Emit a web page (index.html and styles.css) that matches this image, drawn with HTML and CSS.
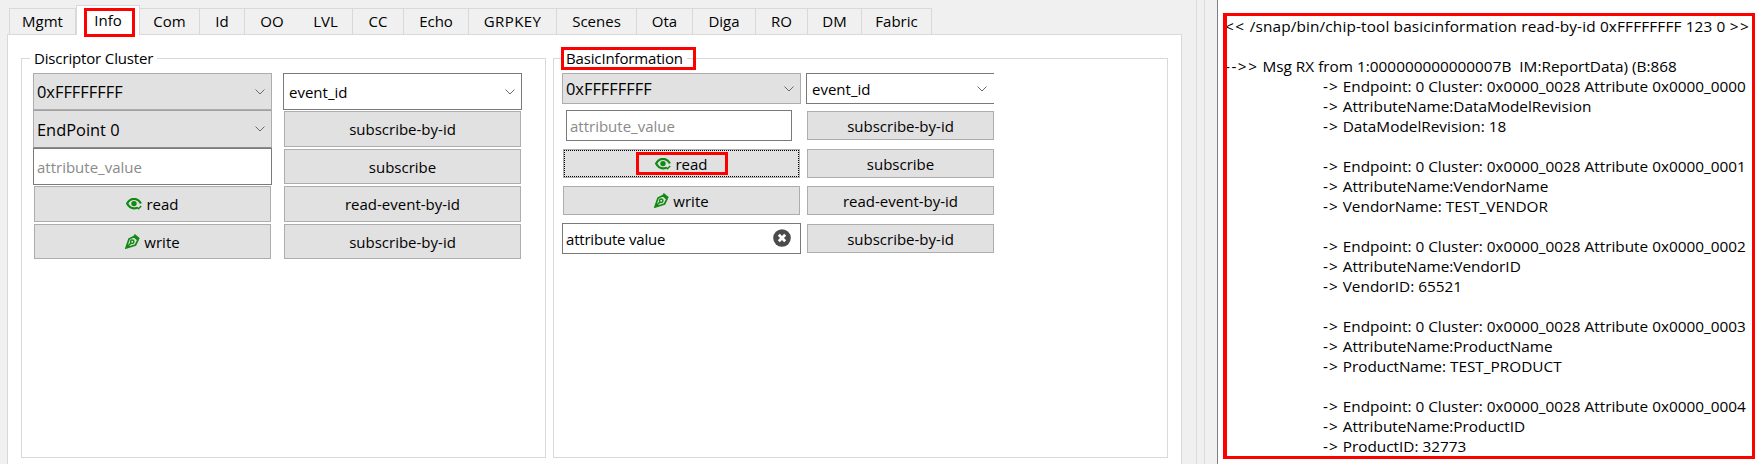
FILE: index.html
```html
<!DOCTYPE html>
<html lang="en">
<head>
<meta charset="utf-8">
<title>Matter tool</title>
<link rel="stylesheet" href="styles.css">
</head>
<body>
<svg class="defs" width="0" height="0" aria-hidden="true">
  <symbol id="i-read" viewBox="0 0 16 12">
    <path d="M11.200 9.800C10.200 10.200 9.200 10.400 8 10.400 5 10.400 2.600 8.500 1.100 5.600 2.600 2.700 5 .9 8 .9s5.400 1.800 6.900 4.700" fill="none" stroke="currentColor" stroke-width="2.200"/>
    <circle cx="8" cy="5.600" r="2.700" fill="currentColor"/>
    <path d="M11 9.300l1.500 1.500 2.700-2.800" fill="none" stroke="currentColor" stroke-width="1.500"/>
  </symbol>
  <symbol id="i-write" viewBox="0 0 15 15">
    <path fill="none" stroke="currentColor" stroke-width="1.700" d="M9.300 .7l5 4.200M9 2.500L4 5 1 14l9.500-3L13 6zM1.500 13.500L6 9"/>
    <circle cx="7.200" cy="7.800" r="1.700" fill="none" stroke="currentColor" stroke-width="1.500"/>
  </symbol>
  <symbol id="i-chev" viewBox="0 0 10 6">
    <path d="M.5.500L5 5 9.500.500" fill="none" stroke="currentColor"/>
  </symbol>
</svg>
<div class="app">
  <main class="left">
    <nav class="tabs">
      <span class="tab t-mgmt">Mgmt</span>
      <span class="tab active t-info">Info<i class="mark mark-info"></i></span>
      <span class="tab t-com">Com</span>
      <span class="tab t-id">Id</span>
      <span class="tab t-oo">OO</span>
      <span class="tab t-lvl">LVL</span>
      <span class="tab t-cc">CC</span>
      <span class="tab t-echo">Echo</span>
      <span class="tab t-grp">GRPKEY</span>
      <span class="tab t-sc">Scenes</span>
      <span class="tab t-ota">Ota</span>
      <span class="tab t-diga">Diga</span>
      <span class="tab t-ro">RO</span>
      <span class="tab t-dm">DM</span>
      <span class="tab t-fab">Fabric</span>
    </nav>
    <section class="pane">
      <div class="group g1">
        <span class="legend">Discriptor Cluster</span>
        <div class="cols">
          <div class="col c1">
            <div class="combo big h37">0xFFFFFFFF<svg class="chev"><use href="#i-chev"/></svg></div>
            <div class="combo big h38 dark">EndPoint 0<svg class="chev"><use href="#i-chev"/></svg></div>
            <div class="input h37 ph">attribute_value</div>
            <button class="btn h36 inset top1"><svg class="ico ico-read"><use href="#i-read"/></svg>read</button>
            <button class="btn h35 inset top2"><svg class="ico ico-write"><use href="#i-write"/></svg>write</button>
          </div>
          <div class="col c2">
            <div class="combo white h37">event_id<svg class="chev"><use href="#i-chev"/></svg></div>
            <button class="btn h36 inset top1">subscribe-by-id</button>
            <button class="btn h35 inset top2">subscribe</button>
            <button class="btn h36 inset top2">read-event-by-id</button>
            <button class="btn h35 inset top2">subscribe-by-id</button>
          </div>
        </div>
      </div>
      <div class="group g2">
        <span class="legend">BasicInformation<i class="mark mark-title"></i></span>
        <div class="cols">
          <div class="col c3">
            <div class="combo big h31">0xFFFFFFFF<svg class="chev"><use href="#i-chev"/></svg></div>
            <div class="input h31 ph narrow">attribute_value</div>
            <button class="btn h29 focus"><span class="readbox"><svg class="ico ico-read"><use href="#i-read"/></svg>read</span></button>
            <button class="btn h29 mid"><svg class="ico ico-write"><use href="#i-write"/></svg>write</button>
            <div class="input h31 clear">attribute value<svg class="x" viewBox="0 0 18 18"><circle cx="9" cy="9" r="8.800" fill="#4b4b4b"/><path d="M5.800 5.800l6.400 6.400M12.200 5.800l-6.400 6.400" stroke="#fff" stroke-width="2.800"/></svg></div>
          </div>
          <div class="col c4">
            <div class="combo white h31 open">event_id<svg class="chev"><use href="#i-chev"/></svg></div>
            <button class="btn h29 r1">subscribe-by-id</button>
            <button class="btn h29 r2">subscribe</button>
            <button class="btn h29 r3">read-event-by-id</button>
            <button class="btn h29 r4">subscribe-by-id</button>
          </div>
        </div>
      </div>
    </section>
  </main>
  <div class="split"></div>
  <aside class="log">
<pre class="logtext"><span class="head"><span class="ar">&lt;&lt;</span> /snap/bin/chip-tool basicinformation read-by-id 0xFFFFFFFF 123 0 <span class="ar">&gt;&gt;</span></span>

<span class="ar">--&gt;&gt;</span> Msg RX from 1:000000000000007B  IM:ReportData) (B:868
<span class="ind"><span class="ar1">-&gt;</span> Endpoint: 0 Cluster: 0x0000_0028 Attribute 0x0000_0000</span>
<span class="ind"><span class="ar1">-&gt;</span> AttributeName:DataModelRevision</span>
<span class="ind"><span class="ar1">-&gt;</span> DataModelRevision: 18</span>

<span class="ind"><span class="ar1">-&gt;</span> Endpoint: 0 Cluster: 0x0000_0028 Attribute 0x0000_0001</span>
<span class="ind"><span class="ar1">-&gt;</span> AttributeName:VendorName</span>
<span class="ind"><span class="ar1">-&gt;</span> VendorName: TEST_VENDOR</span>

<span class="ind"><span class="ar1">-&gt;</span> Endpoint: 0 Cluster: 0x0000_0028 Attribute 0x0000_0002</span>
<span class="ind"><span class="ar1">-&gt;</span> AttributeName:VendorID</span>
<span class="ind"><span class="ar1">-&gt;</span> VendorID: 65521</span>

<span class="ind"><span class="ar1">-&gt;</span> Endpoint: 0 Cluster: 0x0000_0028 Attribute 0x0000_0003</span>
<span class="ind"><span class="ar1">-&gt;</span> AttributeName:ProductName</span>
<span class="ind"><span class="ar1">-&gt;</span> ProductName: TEST_PRODUCT</span>

<span class="ind"><span class="ar1">-&gt;</span> Endpoint: 0 Cluster: 0x0000_0028 Attribute 0x0000_0004</span>
<span class="ind"><span class="ar1">-&gt;</span> AttributeName:ProductID</span>
<span class="ind"><span class="ar1">-&gt;</span> ProductID: 32773</span></pre>
    <i class="mark mark-log"></i>
  </aside>
</div>
</body>
</html>
```
FILE: styles.css
```css
* { box-sizing: border-box; }
html, body { margin: 0; height: 100%; }
body {
  background: #f0f0f0;
  color: #000;
  font-family: "Open Sans", "Noto Sans", sans-serif;
  font-size: 15px;
  overflow: hidden;
}
.defs { position: absolute; }
.app { display: flex; height: 464px; width: 1759px; }
.left { width: 1182px; padding-left: 7px; flex: none; }

.tabs { display: flex; height: 34px; padding: 5px 0 0 2px; position: relative; z-index: 1; }
.tab {
  position: relative;
  height: 26px;
  margin-top: 3px;
  background: #f0f0f0;
  border: 1px solid #d9d9d9;
  border-bottom: none;
  border-left: none;
  display: flex;
  align-items: center;
  justify-content: center;
  line-height: 1;
}
.t-mgmt { width: 67px; border-left: 1px solid #d9d9d9; }
.active { height: 30px; margin-top: 0; background: #fff; border-left: 1px solid #d9d9d9; }
.t-info { width: 64px; }
.t-com { width: 60px; }
.t-id { width: 45px; }
.t-oo { width: 54px; border-right: none; }
.t-lvl { width: 54px; }
.t-cc { width: 51px; }
.t-echo { width: 65px; }
.t-grp { width: 88px; letter-spacing: .4px; }
.t-sc { width: 80px; }
.t-ota { width: 56px; }
.t-diga { width: 63px; }
.t-ro { width: 52px; }
.t-dm { width: 54px; }
.t-fab { width: 70px; }

.mark { position: absolute; display: block; border: 3px solid #f00; pointer-events: none; }
.mark-info { left: 7px; top: 2px; width: 51px; height: 29px; }
.mark-title { left: -1px; top: -1px; width: 135px; height: 23px; }
.mark-log { left: 5px; top: 13px; width: 532px; height: 446px; border-left-width: 4px; }

.pane {
  height: 430px;
  background: #fff;
  border: 1px solid #d9d9d9;
  border-bottom: none;
  padding: 23px 13px 0;
  display: flex;
  gap: 7px;
  align-items: flex-start;
}
.group {
  position: relative;
  height: 400px;
  border: 1px solid #d9d9d9;
  flex: none;
  padding-top: 14px;
}
.g1 { width: 525px; padding-left: 11px; }
.g2 { width: 615px; padding-left: 8px; }
.legend {
  position: absolute;
  left: 8px;
  top: -11px;
  padding: 0 4px;
  height: 20px;
  line-height: 20px;
  background: #fff;
  white-space: nowrap;
  letter-spacing: -.15px;
}

.cols { display: flex; }
.col { display: flex; flex-direction: column; align-items: stretch; flex: none; }
.c1 { width: 239px; }
.c2 { width: 239px; margin-left: 11px; }
.c3 { width: 239px; }
.c4 { width: 188px; margin-left: 5px; }

.combo, .input, .btn {
  font: inherit;
  color: inherit;
  flex: none;
}
.combo {
  position: relative;
  display: flex;
  align-items: center;
  padding-left: 3px;
  background: #e1e1e1;
  border: 1px solid #adadad;
}
.big { font-size: 16.400px; }
.dark { border-top-color: #a0a0a0; border-bottom-color: #8c8c8c; }
.combo.white { background: #fff; border-color: #7a7a7a; padding-left: 5px; }
.combo.open { border-right: none; }
.chev { position: absolute; right: 6px; top: 50%; width: 10px; height: 6px; margin-top: -3px; color: #6a6a6a; }
.open .chev { right: 7px; }
.input {
  display: flex;
  align-items: center;
  padding-left: 3px;
  background: #fff;
  border: 1px solid #7a7a7a;
  position: relative;
  letter-spacing: -.2px;
}
.ph { color: #8a8a8a; letter-spacing: 0; }
.narrow { width: 226px; margin: 6px 0 0 4px; }
.clear { margin-top: 8px; }
.x { position: absolute; right: 9px; top: 5px; width: 18px; height: 18px; }
.btn {
  display: flex;
  align-items: center;
  justify-content: center;
  padding: 0;
  background: #e1e1e1;
  border: 1px solid #adadad;
  border-radius: 0;
}
.inset { margin: 0 1px; }
.top1 { margin-top: 1px; }
.top2 { margin-top: 2px; }
.ico { color: #118a11; flex: none; }
.ico-read { width: 16px; height: 12px; margin-right: 4px; }
.ico-write { width: 15px; height: 15px; margin-right: 4px; }
.h38 { height: 38px; }
.h37 { height: 37px; }
.h36 { height: 36px; }
.h35 { height: 35px; }
.h31 { height: 31px; }
.h29 { height: 29px; }
.focus { margin: 8px 1px 0; outline: 1px dotted #000; outline-offset: -2px; }
.mid { margin: 8px 1px 0; }
.c4 .btn { margin-left: 1px; }
.r1 { margin-top: 7px; }
.r2 { margin-top: 9px; }
.r3 { margin-top: 8px; }
.r4 { margin-top: 9px; }
.readbox {
  display: flex;
  align-items: center;
  justify-content: center;
  width: 92px;
  height: 23px;
  border: 3px solid #f00;
}

.split {
  width: 36px;
  flex: none;
  background:
    linear-gradient(#dcdcdc, #dcdcdc) 14px 0 / 1px 100% no-repeat,
    linear-gradient(#dcdcdc, #dcdcdc) 22px 0 / 1px 100% no-repeat;
  border-right: 1px solid #808080;
}
.log { position: relative; flex: 1; background: #fff; min-width: 0; }
.logtext {
  margin: 0;
  padding: 16px 0 0 7px;
  font: inherit;
  font-size: 15.350px;
  line-height: 20px;
  white-space: pre;
}
.ind { display: inline-block; padding-left: 98px; }
.head { letter-spacing: .15px; }
.ar { letter-spacing: 1.500px; }
.ar1 { letter-spacing: 1px; }
```
